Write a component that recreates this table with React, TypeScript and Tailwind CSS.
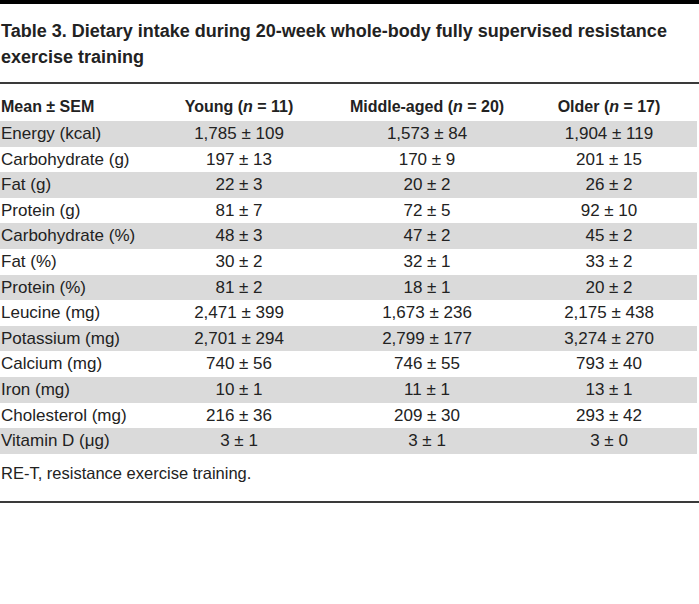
import React from 'react';

type Row = {
  label: React.ReactNode;
  young: string;
  middle: string;
  older: string;
};

const rows: Row[] = [
  { label: 'Energy (kcal)', young: '1,785 ± 109', middle: '1,573 ± 84', older: '1,904 ± 119' },
  { label: 'Carbohydrate (g)', young: '197 ± 13', middle: '170 ± 9', older: '201 ± 15' },
  { label: 'Fat (g)', young: '22 ± 3', middle: '20 ± 2', older: '26 ± 2' },
  { label: 'Protein (g)', young: '81 ± 7', middle: '72 ± 5', older: '92 ± 10' },
  { label: 'Carbohydrate (%)', young: '48 ± 3', middle: '47 ± 2', older: '45 ± 2' },
  { label: 'Fat (%)', young: '30 ± 2', middle: '32 ± 1', older: '33 ± 2' },
  { label: 'Protein (%)', young: '81 ± 2', middle: '18 ± 1', older: '20 ± 2' },
  { label: 'Leucine (mg)', young: '2,471 ± 399', middle: '1,673 ± 236', older: '2,175 ± 438' },
  { label: 'Potassium (mg)', young: '2,701 ± 294', middle: '2,799 ± 177', older: '3,274 ± 270' },
  { label: 'Calcium (mg)', young: '740 ± 56', middle: '746 ± 55', older: '793 ± 40' },
  { label: 'Iron (mg)', young: '10 ± 1', middle: '11 ± 1', older: '13 ± 1' },
  { label: 'Cholesterol (mg)', young: '216 ± 36', middle: '209 ± 30', older: '293 ± 42' },
  { label: 'Vitamin D (μg)', young: '3 ± 1', middle: '3 ± 1', older: '3 ± 0' },
];

const cols = 'grid grid-cols-[150px_178px_198px_166px] w-[697px]';

export default function App() {
  return (
    <div className="w-[699px] h-[604px] bg-white text-[#222] font-['Liberation_Sans',Arial,sans-serif]">
      <div className="h-[4px] bg-black" />

      {/* title */}
      <h1 className="pt-[14px] pl-[1px] text-[18px] leading-[26px] font-bold">
        Table 3. Dietary intake during 20-week whole-body fully supervised resistance
        <br />
        exercise training
      </h1>

      <div className="mt-[12px] h-[2px] bg-[#3a3a3a]" />

      {/* header */}
      <div className={`${cols} h-[37px] pt-[13px] text-[16px] leading-[20px] font-bold`}>
        <div className="pl-[1px]">Mean ± SEM</div>
        <div className="text-center">
          Young (<i>n</i> = 11)
        </div>
        <div className="text-center">
          Middle-aged (<i>n</i> = 20)
        </div>
        <div className="text-center">
          Older (<i>n</i> = 17)
        </div>
      </div>

      {/* body */}
      {rows.map((r, i) => (
        <div
          key={i}
          className={`${cols} h-[25.6px] text-[17px] leading-[25.6px] ${i % 2 === 0 ? 'bg-[#dadada]' : 'bg-white'}`}
        >
          <div className="pl-[1px] whitespace-nowrap">{r.label}</div>
          <div className="text-center">{r.young}</div>
          <div className="text-center">{r.middle}</div>
          <div className="text-center">{r.older}</div>
        </div>
      ))}

      <p className="mt-[6px] pl-[1px] text-[16.5px] leading-[26px]">RE-T, resistance exercise training.</p>

      <div className="mt-[15px] h-[2px] bg-[#3a3a3a]" />
    </div>
  );
}
